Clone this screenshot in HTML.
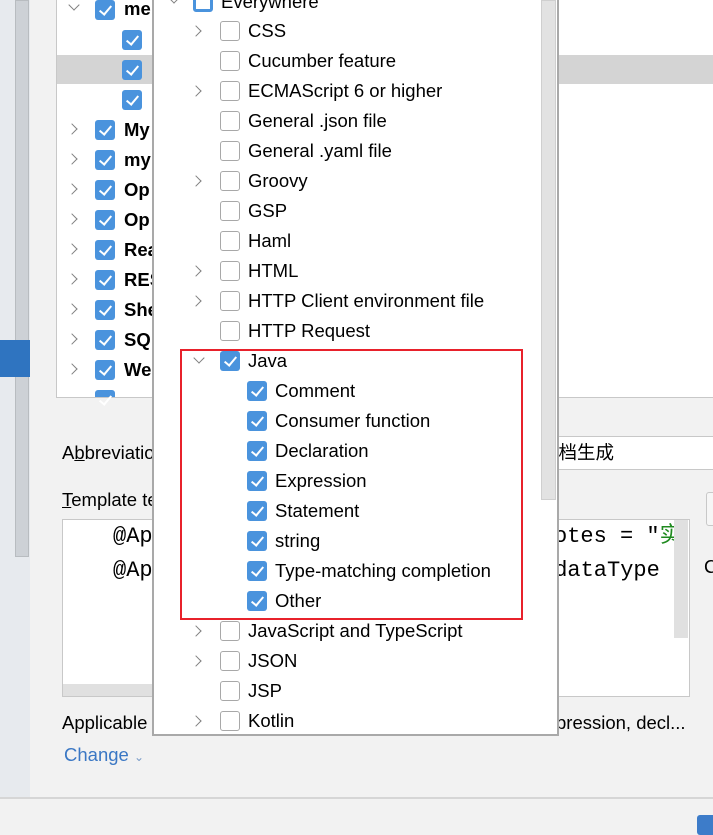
<!DOCTYPE html>
<html><head><meta charset="utf-8"><style>
*{margin:0;padding:0;box-sizing:border-box}
body{width:713px;height:834px;overflow:hidden;background:#f2f2f2;position:relative;font-family:"Liberation Sans","Noto Sans CJK SC",sans-serif;font-size:18.5px;color:#000}
.a{position:absolute}
.cb{position:absolute;width:20px;height:20px;border-radius:3px}
.on{background:#4a93dd}
.on::after{content:"";position:absolute;left:7px;top:3px;width:5px;height:10px;border:solid #fff;border-width:0 2.5px 2.5px 0;transform:rotate(40deg)}
.off{background:#fff;border:1.5px solid #a8a8a8}
.arr{position:absolute;width:8px;height:8px;border:solid #808080;border-width:0 1.8px 1.8px 0}
.r{transform:rotate(-45deg)}
.d{transform:rotate(45deg)}
.t{position:absolute;white-space:nowrap;line-height:22px}
.b{font-weight:bold}
.m{font-family:'Liberation Mono',"Noto Sans CJK SC",monospace;font-size:22px}
</style></head><body>
<div class="a" style="left:0;top:0;width:30px;height:797px;background:#e7eaee"></div>
<div class="a" style="left:15px;top:0;width:14px;height:557px;background:#cdd1d6;border:1px solid #b8bcc0"></div>
<div class="a" style="left:0;top:340px;width:30px;height:37px;background:#2f74c0"></div>
<div class="a" style="left:0;top:797px;width:713px;height:2px;background:#d6d6d6"></div>
<div class="a" style="left:697px;top:815px;width:20px;height:20px;background:#3d7cc9;border-radius:3px"></div>
<div class="a" style="left:56px;top:0;width:660px;height:398px;background:#fff;border:1px solid #c8c8c8;border-top:none"></div>
<div class="a" style="left:57px;top:55px;width:656px;height:29px;background:#d4d4d4"></div>
<div class="arr d" style="left:70px;top:1px"></div>
<div class="cb on" style="left:95px;top:0px"></div><div class="t b" style="left:124px;top:-2px">me</div>
<div class="cb on" style="left:122px;top:30px"></div>
<div class="cb on" style="left:122px;top:60px"></div>
<div class="cb on" style="left:122px;top:90px"></div>
<div class="arr r" style="left:68px;top:125px"></div><div class="cb on" style="left:95px;top:120px"></div><div class="t b" style="left:124px;top:119px">My</div>
<div class="arr r" style="left:68px;top:155px"></div><div class="cb on" style="left:95px;top:150px"></div><div class="t b" style="left:124px;top:149px">my</div>
<div class="arr r" style="left:68px;top:185px"></div><div class="cb on" style="left:95px;top:180px"></div><div class="t b" style="left:124px;top:179px">Op</div>
<div class="arr r" style="left:68px;top:215px"></div><div class="cb on" style="left:95px;top:210px"></div><div class="t b" style="left:124px;top:209px">Op</div>
<div class="arr r" style="left:68px;top:245px"></div><div class="cb on" style="left:95px;top:240px"></div><div class="t b" style="left:124px;top:239px">Rea</div>
<div class="arr r" style="left:68px;top:275px"></div><div class="cb on" style="left:95px;top:270px"></div><div class="t b" style="left:124px;top:269px">RES</div>
<div class="arr r" style="left:68px;top:305px"></div><div class="cb on" style="left:95px;top:300px"></div><div class="t b" style="left:124px;top:299px">She</div>
<div class="arr r" style="left:68px;top:335px"></div><div class="cb on" style="left:95px;top:330px"></div><div class="t b" style="left:124px;top:329px">SQ</div>
<div class="arr r" style="left:68px;top:365px"></div><div class="cb on" style="left:95px;top:360px"></div><div class="t b" style="left:124px;top:359px">We</div>
<div class="cb on" style="left:95px;top:390px;height:7px;border-radius:3px 3px 0 0"></div>
<div class="t" style="left:62px;top:442px">A<u>b</u>breviation</div>
<div class="a" style="left:540px;top:436px;width:180px;height:34px;background:#fff;border:1px solid #c8c8c8"></div>
<div class="t" style="left:540px;top:442px">文档生成</div>
<div class="t" style="left:62px;top:489px"><u>T</u>emplate text</div>
<div class="a" style="left:706px;top:492px;width:20px;height:34px;background:#f6f6f6;border:1px solid #c8c8c8;border-radius:3px"></div>
<div class="a" style="left:62px;top:519px;width:628px;height:178px;background:#fff;border:1px solid #c8c8c8;overflow:hidden">
<div class="t m" style="left:50px;top:6px">@Ap</div>
<div class="t m" style="left:50px;top:40px">@Ap</div>
<div class="t m" style="left:491px;top:6px">otes = "<span style="color:#1f8a1f">实</span></div>
<div class="t m" style="left:478px;top:40px">,dataType</div>
<div class="a" style="left:611px;top:0;width:14px;height:118px;background:#e0e0e0"></div>
<div class="a" style="left:0;top:164px;width:480px;height:12px;background:#e0e0e0"></div>
</div>
<div class="t" style="left:704px;top:556px">C</div>
<div class="t" style="left:62px;top:712px">Applicable</div>
<div class="t" style="left:556px;top:712px">pression, decl...</div>
<div class="t" style="left:64px;top:744px;color:#3a77c4">Change <span style="font-size:12px;color:#7a9cc8">&#8964;</span></div>
<div class="a" style="left:152px;top:-2px;width:407px;height:738px;background:#fff;border:2px solid #a9a9a9;border-top:none"></div>
<div class="a" style="left:541px;top:0;width:15px;height:500px;background:#e2e2e2;border:1px solid #cfcfcf"></div>
<div class="a" style="left:180px;top:349px;width:343px;height:271px;border:2px solid #e8212b"></div>
<div class="arr d" style="left:170px;top:-6px"></div><div class="cb" style="left:193px;top:-8px;border:3px solid #4a93dd;background:#fff"></div><div class="t" style="left:221px;top:-9px">Everywhere</div>
<div class="arr r" style="left:192px;top:27px"></div><div class="cb off" style="left:220px;top:21px"></div><div class="t" style="left:248px;top:20px">CSS</div>
<div class="cb off" style="left:220px;top:51px"></div><div class="t" style="left:248px;top:50px">Cucumber feature</div>
<div class="arr r" style="left:192px;top:87px"></div><div class="cb off" style="left:220px;top:81px"></div><div class="t" style="left:248px;top:80px">ECMAScript 6 or higher</div>
<div class="cb off" style="left:220px;top:111px"></div><div class="t" style="left:248px;top:110px">General .json file</div>
<div class="cb off" style="left:220px;top:141px"></div><div class="t" style="left:248px;top:140px">General .yaml file</div>
<div class="arr r" style="left:192px;top:177px"></div><div class="cb off" style="left:220px;top:171px"></div><div class="t" style="left:248px;top:170px">Groovy</div>
<div class="cb off" style="left:220px;top:201px"></div><div class="t" style="left:248px;top:200px">GSP</div>
<div class="cb off" style="left:220px;top:231px"></div><div class="t" style="left:248px;top:230px">Haml</div>
<div class="arr r" style="left:192px;top:267px"></div><div class="cb off" style="left:220px;top:261px"></div><div class="t" style="left:248px;top:260px">HTML</div>
<div class="arr r" style="left:192px;top:297px"></div><div class="cb off" style="left:220px;top:291px"></div><div class="t" style="left:248px;top:290px">HTTP Client environment file</div>
<div class="cb off" style="left:220px;top:321px"></div><div class="t" style="left:248px;top:320px">HTTP Request</div>
<div class="arr d" style="left:195px;top:354px"></div><div class="cb on" style="left:220px;top:351px"></div><div class="t" style="left:248px;top:350px">Java</div>
<div class="cb on" style="left:247px;top:381px"></div><div class="t" style="left:275px;top:380px">Comment</div>
<div class="cb on" style="left:247px;top:411px"></div><div class="t" style="left:275px;top:410px">Consumer function</div>
<div class="cb on" style="left:247px;top:441px"></div><div class="t" style="left:275px;top:440px">Declaration</div>
<div class="cb on" style="left:247px;top:471px"></div><div class="t" style="left:275px;top:470px">Expression</div>
<div class="cb on" style="left:247px;top:501px"></div><div class="t" style="left:275px;top:500px">Statement</div>
<div class="cb on" style="left:247px;top:531px"></div><div class="t" style="left:275px;top:530px">string</div>
<div class="cb on" style="left:247px;top:561px"></div><div class="t" style="left:275px;top:560px">Type-matching completion</div>
<div class="cb on" style="left:247px;top:591px"></div><div class="t" style="left:275px;top:590px">Other</div>
<div class="arr r" style="left:192px;top:627px"></div><div class="cb off" style="left:220px;top:621px"></div><div class="t" style="left:248px;top:620px">JavaScript and TypeScript</div>
<div class="arr r" style="left:192px;top:657px"></div><div class="cb off" style="left:220px;top:651px"></div><div class="t" style="left:248px;top:650px">JSON</div>
<div class="cb off" style="left:220px;top:681px"></div><div class="t" style="left:248px;top:680px">JSP</div>
<div class="arr r" style="left:192px;top:717px"></div><div class="cb off" style="left:220px;top:711px"></div><div class="t" style="left:248px;top:710px">Kotlin</div>
</body></html>
